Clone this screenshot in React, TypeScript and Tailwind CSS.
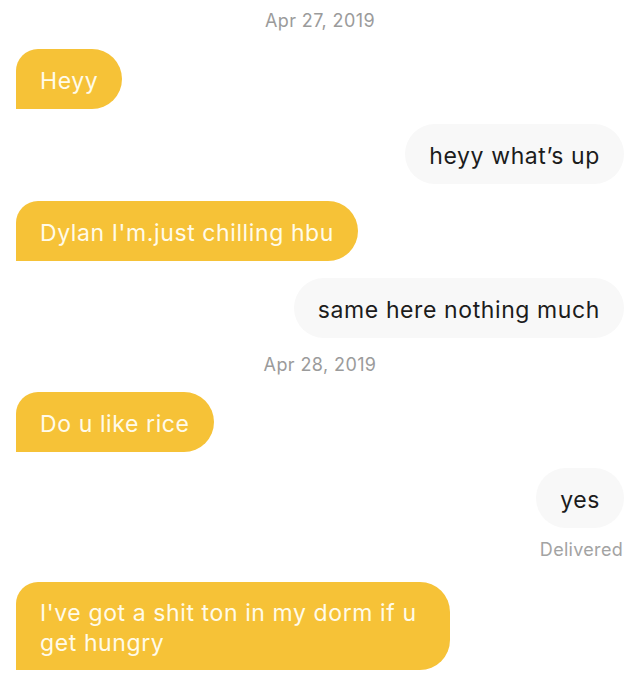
import React from 'react';

type Msg =
  | { kind: 'date'; text: string; mt: string }
  | { kind: 'in'; text: React.ReactNode; mt: string }
  | { kind: 'out'; text: string; mt: string }
  | { kind: 'status'; text: string; mt: string };

const messages: Msg[] = [
  { kind: 'date', text: 'Apr 27, 2019', mt: 'mt-[11px]' },
  { kind: 'in', text: 'Heyy', mt: 'mt-[18px]' },
  { kind: 'out', text: 'heyy what\u2019s up', mt: 'mt-[15px]' },
  { kind: 'in', text: "Dylan I'm.just chilling hbu", mt: 'mt-[17px]' },
  { kind: 'out', text: 'same here nothing much', mt: 'mt-[17px]' },
  { kind: 'date', text: 'Apr 28, 2019', mt: 'mt-[17px]' },
  { kind: 'in', text: 'Do u like rice', mt: 'mt-[17px]' },
  { kind: 'out', text: 'yes', mt: 'mt-[16px]' },
  { kind: 'status', text: 'Delivered', mt: 'mt-[12px]' },
];

export default function App() {
  return (
    <div
      className="w-[640px] h-[679px] overflow-hidden bg-white flex flex-col pl-4 pr-[16px]"
      style={{ fontFamily: 'Inter, "Noto Sans", sans-serif' }}
    >
      {messages.map((m, i) => {
        if (m.kind === 'date') {
          return (
            <div key={i} className={`${m.mt} text-center text-[18px] tracking-[0.4px] leading-[20px] text-[#9b9b9b]`}>
              {m.text}
            </div>
          );
        }
        if (m.kind === 'status') {
          return (
            <div key={i} className={`${m.mt} text-right text-[18px] tracking-[0.3px] leading-[20px] text-[#a3a3a3] pr-[1px]`}>
              {m.text}
            </div>
          );
        }
        if (m.kind === 'in') {
          return (
            <div key={i} className={`${m.mt} flex justify-start`}>
              <div className="bg-[#f6c237] text-[#fffbea] text-[23px] tracking-[0.6px] leading-[30px] px-6 pt-[17px] pb-[13px] rounded-t-[30px] rounded-br-[30px] rounded-tl-[22px]">
                {m.text}
              </div>
            </div>
          );
        }
        return (
          <div key={i} className={`${m.mt} flex justify-end`}>
            <div className="bg-[#f8f8f8] text-[#1c1c1c] text-[23px] tracking-[0.6px] leading-[30px] px-6 pt-[17px] pb-[13px] rounded-[30px]">
              {m.text}
            </div>
          </div>
        );
      })}
      <div className="mt-[22px] flex justify-start">
        <div className="max-w-[434px] bg-[#f6c237] text-[#fffbea] text-[23px] tracking-[0.6px] leading-[30px] px-6 pt-[16px] pb-[12px] rounded-t-[30px] rounded-br-[30px] rounded-tl-[22px]">
          I've got a shit ton in my dorm if u get hungry
        </div>
      </div>
    </div>
  );
}
